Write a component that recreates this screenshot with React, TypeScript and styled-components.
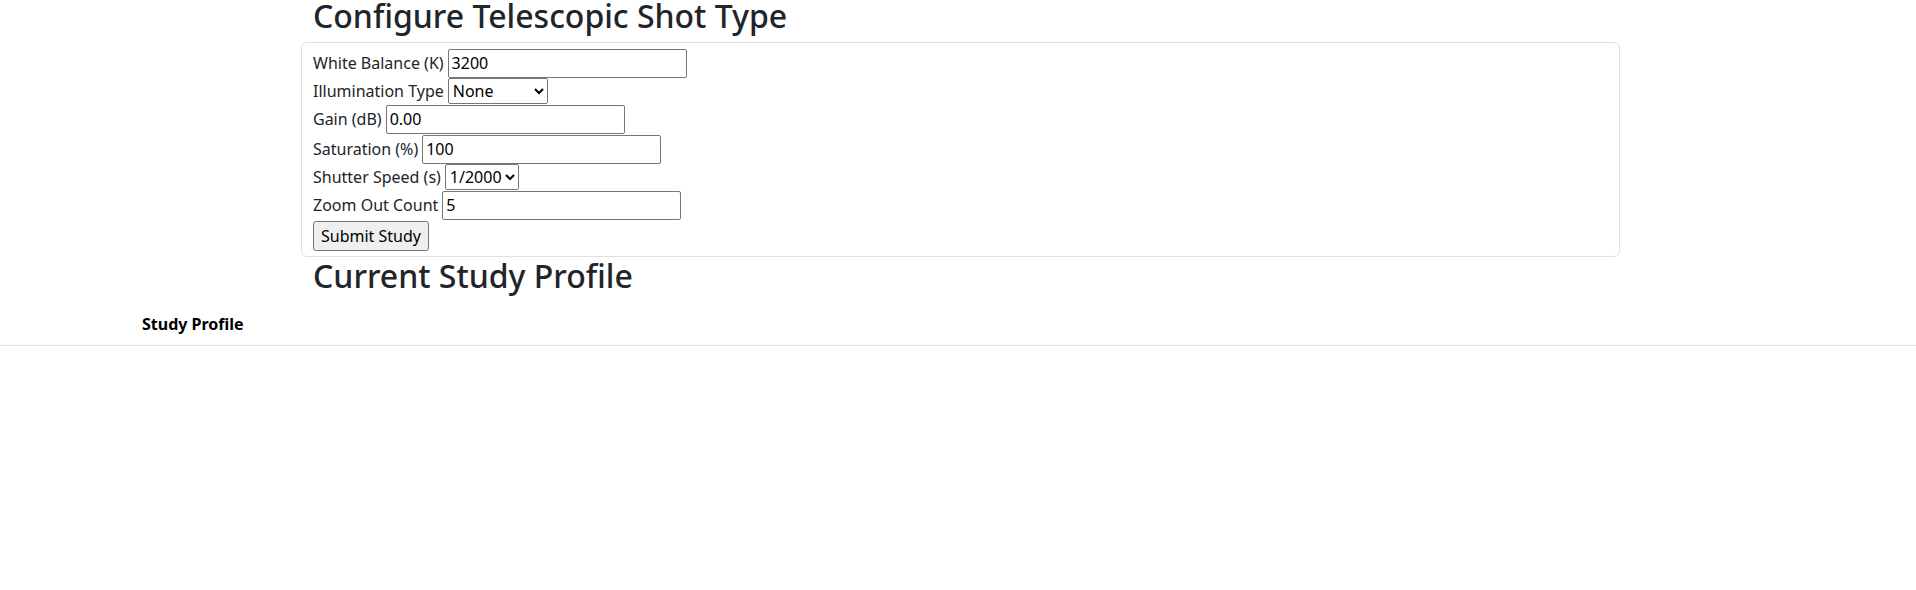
import styled, { createGlobalStyle } from 'styled-components'

// ── Global ────────────────────────────────────────────────
const GlobalStyle = createGlobalStyle`
  body {
    margin: 0;
    font-family: "Noto Sans", "Open Sans", sans-serif;
    font-size: 16px;
    line-height: 1.5;
    color: #212529;
    background: #fff;
  }
`

// ── Styled ────────────────────────────────────────────────
const Container = styled.div`
  width: 1319px;
  margin-left: 301px;
`

const Title = styled.h2<{ $first?: boolean }>`
  margin: 0 0 ${(p) => (p.$first ? '10px' : '8px')} 12px;
  font-size: 32px;
  font-weight: 500;
  line-height: ${(p) => (p.$first ? 1 : 1.2)};
  color: #212529;
`

const Card = styled.form`
  border: 1px solid #dfdfdf;
  border-radius: 6px;
  padding: 5px 11px;
  display: flex;
  flex-direction: column;
`

const Row = styled.div<{ $h: number }>`
  display: flex;
  align-items: center;
  gap: 4px;
  height: ${(p) => p.$h}px;
`

const Label = styled.label`
  font-size: 16px;
  white-space: nowrap;
`

const TextInput = styled.input`
  box-sizing: border-box;
  width: 239px;
  height: 29px;
  padding: 1px 3px;
  border: 1px solid #767676;
  border-radius: 2px;
  font-family: "Noto Sans", sans-serif;
  font-size: 16px;
  color: #000;
  background: #fff;
`

const Select = styled.select<{ $w: number }>`
  box-sizing: border-box;
  width: ${(p) => p.$w}px;
  height: 26px;
  font-family: "Noto Sans", sans-serif;
  font-size: 16px;
  color: #000;
`

const SubmitButton = styled.button`
  box-sizing: border-box;
  height: 30px;
  padding: 1px 7px;
  border: 1px solid #767676;
  border-radius: 3px;
  background: #efefef;
  font-family: "Noto Sans", sans-serif;
  font-size: 16px;
  color: #000;
`

const TabBar = styled.div`
  display: flex;
  border-bottom: 1px solid #dee2e6;
`

const Tab = styled.div`
  margin-left: 126px;
  padding: 9px 16px 9px;
  font-weight: 700;
  line-height: 24px;
  color: #000;
`

// ── Component ─────────────────────────────────────────────
export default function App() {
  return (
    <>
      <GlobalStyle />
      <Container>
        <Title $first>Configure Telescopic Shot Type</Title>
        <Card onSubmit={(e) => e.preventDefault()}>
          <Row $h={30}>
            <Label>White Balance (K)</Label>
            <TextInput defaultValue="3200" />
          </Row>
          <Row $h={26}>
            <Label>Illumination Type</Label>
            <Select $w={100} defaultValue="None">
              <option>None</option>
              <option>Tungsten</option>
              <option>Daylight</option>
            </Select>
          </Row>
          <Row $h={30}>
            <Label>Gain (dB)</Label>
            <TextInput defaultValue="0.00" />
          </Row>
          <Row $h={30}>
            <Label>Saturation (%)</Label>
            <TextInput defaultValue="100" />
          </Row>
          <Row $h={26}>
            <Label>Shutter Speed (s)</Label>
            <Select $w={74} defaultValue="1/2000">
              <option>1/2000</option>
              <option>1/1000</option>
              <option>1/500</option>
            </Select>
          </Row>
          <Row $h={30}>
            <Label>Zoom Out Count</Label>
            <TextInput defaultValue="5" />
          </Row>
          <Row $h={31}>
            <SubmitButton type="submit">Submit Study</SubmitButton>
          </Row>
        </Card>
        <Title>Current Study Profile</Title>
      </Container>
      <TabBar>
        <Tab>Study Profile</Tab>
      </TabBar>
    </>
  )
}
